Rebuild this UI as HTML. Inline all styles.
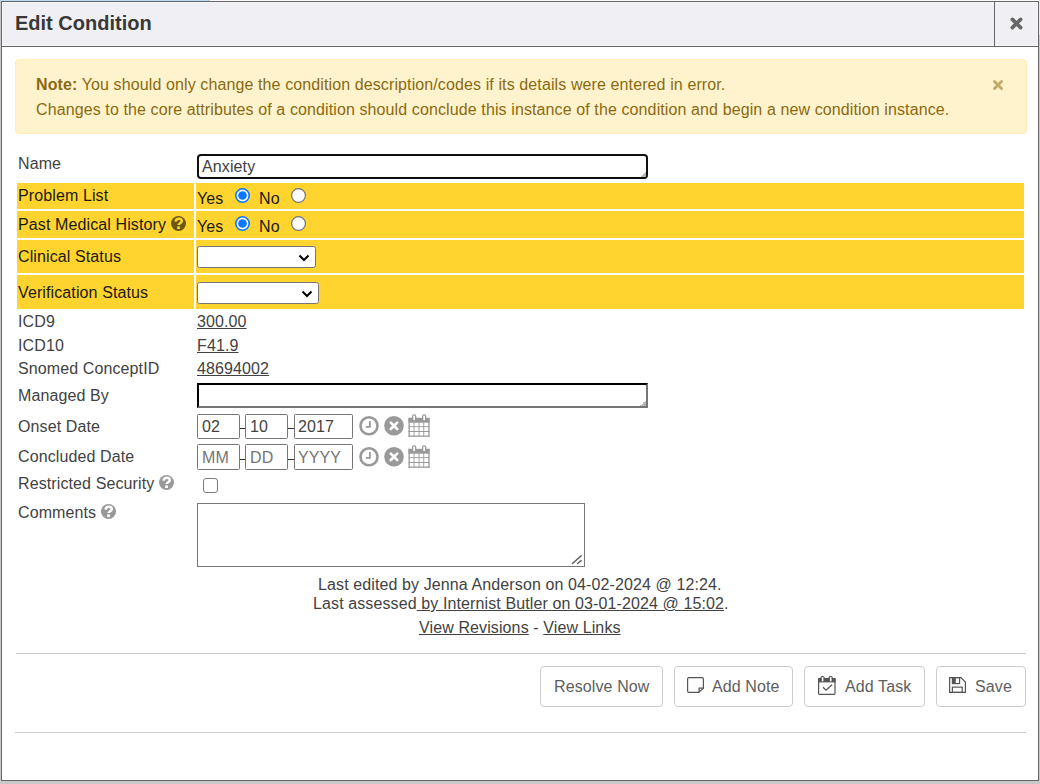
<!DOCTYPE html>
<html><head><meta charset="utf-8">
<style>
html,body{margin:0;padding:0;}
body{width:1040px;height:784px;position:relative;overflow:hidden;background:#c9c9c9;font-family:"Liberation Sans",sans-serif;font-size:16px;line-height:20px;color:#424242;letter-spacing:0.11px;}
.a{position:absolute;white-space:nowrap;}
#dlg{position:absolute;left:1px;top:1px;width:1036px;height:778px;border:1px solid #666;background:#fff;}
#hdr{position:absolute;left:2px;top:2px;width:1036px;height:44px;background:#f0f0f4;box-shadow:inset 0 0 0 1px #f7f7fa;}
.lbl{position:absolute;left:18px;white-space:nowrap;}
.y{background:#ffd42e;position:absolute;}
.blk{color:#1a1a1a;}
.lnk{text-decoration:underline;text-underline-offset:1px;}
.inp{position:absolute;box-sizing:border-box;border:1px solid #767676;border-radius:1.5px;background:#fff;}
.btn{position:absolute;box-sizing:border-box;top:666px;height:41px;border:1px solid #ccc;border-radius:4px;background:#fff;color:#555;}
.hr{position:absolute;height:1px;background:#ccc;}
svg{position:absolute;overflow:visible;}
</style></head><body>
<div class="a" style="left:0;top:0;width:1040px;height:1px;background:#fafafa"></div><div class="a" style="left:0;top:0;width:210px;height:1px;background:#b5dcf0"></div><div class="a" style="left:1039px;top:0;width:1px;height:35px;background:#ececec"></div>
<div id="dlg"></div>
<div id="hdr"></div>
<div class="a" style="left:2px;top:46px;width:1036px;height:1px;background:#666"></div>
<div class="a" style="left:994px;top:2px;width:1px;height:44px;background:#666"></div>
<div class="a" style="left:15px;top:11px;font-weight:bold;font-size:20px;line-height:24px;color:#383838;letter-spacing:0">Edit Condition</div>
<svg style="left:1010px;top:17px" width="13" height="13" viewBox="0 0 13 13"><path d="M2.4 2.4L10.6 10.6M10.6 2.4L2.4 10.6" stroke="#666" stroke-width="3.7" stroke-linecap="round"/></svg>

<!-- alert -->
<div class="a" style="left:15px;top:59px;width:1010px;height:73px;background:#fff3cd;border:1px solid #ffeeba;border-radius:4px"></div>
<div class="a" style="left:36px;top:75px;color:#8a6a10"><b>Note:</b> You should only change the condition description/codes if its details were entered in error.</div>
<div class="a" style="left:36px;top:100px;color:#8a6a10">Changes to the core attributes of a condition should conclude this instance of the condition and begin a new condition instance.</div>
<svg style="left:993px;top:80px" width="10" height="10" viewBox="0 0 10 10"><path d="M1.5 1.5L8.5 8.5M8.5 1.5L1.5 8.5" stroke="#c2ab68" stroke-width="2.9" stroke-linecap="round"/></svg>

<!-- yellow rows -->
<div class="y" style="left:17px;top:183px;width:177px;height:26px"></div>
<div class="y" style="left:196px;top:183px;width:828px;height:26px"></div>
<div class="y" style="left:17px;top:211px;width:177px;height:27px"></div>
<div class="y" style="left:196px;top:211px;width:828px;height:27px"></div>
<div class="y" style="left:17px;top:240px;width:177px;height:33px"></div>
<div class="y" style="left:196px;top:240px;width:828px;height:33px"></div>
<div class="y" style="left:17px;top:275px;width:177px;height:34px"></div>
<div class="y" style="left:196px;top:275px;width:828px;height:34px"></div>

<!-- labels -->
<div class="lbl" style="top:154px">Name</div>
<div class="lbl blk" style="top:186px">Problem List</div>
<div class="lbl blk" style="top:215px">Past Medical History</div>
<div class="lbl blk" style="top:247px">Clinical Status</div>
<div class="lbl blk" style="top:283px">Verification Status</div>
<div class="lbl" style="top:312px">ICD9</div>
<div class="lbl" style="top:336px">ICD10</div>
<div class="lbl" style="top:359px">Snomed ConceptID</div>
<div class="lbl" style="top:386px">Managed By</div>
<div class="lbl" style="top:417px">Onset Date</div>
<div class="lbl" style="top:447px">Concluded Date</div>
<div class="lbl" style="top:474px">Restricted Security</div>
<div class="lbl" style="top:503px">Comments</div>

<!-- help icons -->
<svg style="left:171px;top:216px" width="15" height="15" viewBox="0 0 15 15"><circle cx="7.5" cy="7.5" r="7.5" fill="#6a5916"/><path d="M4.6 5.6C4.8 3.8 6 2.8 7.8 2.8C9.6 2.8 10.8 3.9 10.8 5.3C10.8 7.1 7.6 7.3 7.6 9.1" fill="none" stroke="#ffd42e" stroke-width="2.5"/><rect x="6.2" y="10.4" width="2.7" height="2.6" fill="#ffd42e"/></svg>
<svg style="left:159px;top:475px" width="15" height="15" viewBox="0 0 15 15"><circle cx="7.5" cy="7.5" r="7.5" fill="#999"/><path d="M4.6 5.6C4.8 3.8 6 2.8 7.8 2.8C9.6 2.8 10.8 3.9 10.8 5.3C10.8 7.1 7.6 7.3 7.6 9.1" fill="none" stroke="#fff" stroke-width="2.5"/><rect x="6.2" y="10.4" width="2.7" height="2.6" fill="#fff"/></svg>
<svg style="left:101px;top:504px" width="15" height="15" viewBox="0 0 15 15"><circle cx="7.5" cy="7.5" r="7.5" fill="#999"/><path d="M4.6 5.6C4.8 3.8 6 2.8 7.8 2.8C9.6 2.8 10.8 3.9 10.8 5.3C10.8 7.1 7.6 7.3 7.6 9.1" fill="none" stroke="#fff" stroke-width="2.5"/><rect x="6.2" y="10.4" width="2.7" height="2.6" fill="#fff"/></svg>

<!-- Name input (focused) -->
<div class="a" style="left:197px;top:154px;width:451px;height:25px;box-sizing:border-box;border:2px solid #101010;border-radius:4px;background:#fff"></div>
<div class="a" style="left:640px;top:171px;width:6px;height:6px;background:linear-gradient(135deg,transparent 50%,#c4c4c4 50%,#a8a8a8)"></div>
<div class="a" style="left:202px;top:157px;color:#424242">Anxiety</div>

<!-- radios -->
<div class="a blk" style="left:197px;top:189px">Yes</div>
<div class="a blk" style="left:259px;top:189px">No</div>
<div class="a blk" style="left:197px;top:217px">Yes</div>
<div class="a blk" style="left:259px;top:217px">No</div>
<svg style="left:235px;top:188px" width="15" height="15" viewBox="0 0 15 15"><circle cx="7.5" cy="7.5" r="6.7" fill="#fff" stroke="#0a77ff" stroke-width="1.6"/><circle cx="7.5" cy="7.5" r="4.35" fill="#0a77ff"/></svg>
<svg style="left:291px;top:188px" width="15" height="15" viewBox="0 0 15 15"><circle cx="7.5" cy="7.5" r="6.9" fill="#fff" stroke="#6f727c" stroke-width="1.2"/></svg>
<svg style="left:235px;top:216px" width="15" height="15" viewBox="0 0 15 15"><circle cx="7.5" cy="7.5" r="6.7" fill="#fff" stroke="#0a77ff" stroke-width="1.6"/><circle cx="7.5" cy="7.5" r="4.35" fill="#0a77ff"/></svg>
<svg style="left:291px;top:216px" width="15" height="15" viewBox="0 0 15 15"><circle cx="7.5" cy="7.5" r="6.9" fill="#fff" stroke="#6f727c" stroke-width="1.2"/></svg>

<!-- selects -->
<div class="inp" style="left:197px;top:246px;width:119px;height:22px;border-radius:2.5px"></div>
<svg style="left:298px;top:254px" width="12" height="8" viewBox="0 0 12 8"><path d="M1.5 1.5L6 6L10.5 1.5" fill="none" stroke="#000" stroke-width="2"/></svg>
<div class="inp" style="left:197px;top:282px;width:122px;height:22px;border-radius:2.5px"></div>
<svg style="left:301px;top:290px" width="12" height="8" viewBox="0 0 12 8"><path d="M1.5 1.5L6 6L10.5 1.5" fill="none" stroke="#000" stroke-width="2"/></svg>

<!-- codes -->
<div class="a lnk" style="left:197px;top:312px">300.00</div>
<div class="a lnk" style="left:197px;top:336px">F41.9</div>
<div class="a lnk" style="left:197px;top:359px">48694002</div>

<!-- managed by -->
<div class="a" style="left:197px;top:383px;width:451px;height:25px;box-sizing:border-box;border-style:solid;border-width:2px;border-color:#000 #767676 #767676 #000;background:#fff"></div>
<div class="a" style="left:640px;top:400px;width:6px;height:6px;background:linear-gradient(135deg,transparent 50%,#c4c4c4 50%,#a8a8a8)"></div>

<!-- onset date -->
<div class="inp" style="left:197px;top:414px;width:43px;height:25px"></div>
<div class="inp" style="left:245px;top:414px;width:43px;height:25px"></div>
<div class="inp" style="left:294px;top:414px;width:59px;height:25px"></div>
<div class="a" style="left:202px;top:417px">02</div>
<div class="a" style="left:250px;top:417px">10</div>
<div class="a" style="left:298px;top:417px">2017</div>
<div class="a" style="left:240px;top:428px;width:5px;height:1px;background:#333"></div>
<div class="a" style="left:288px;top:428px;width:6px;height:1px;background:#333"></div>

<!-- concluded date -->
<div class="inp" style="left:197px;top:444px;width:43px;height:26px"></div>
<div class="inp" style="left:245px;top:444px;width:43px;height:26px"></div>
<div class="inp" style="left:294px;top:444px;width:59px;height:26px"></div>
<div class="a" style="left:202px;top:448px;color:#757575">MM</div>
<div class="a" style="left:250px;top:448px;color:#757575">DD</div>
<div class="a" style="left:298px;top:448px;color:#757575">YYYY</div>
<div class="a" style="left:240px;top:459px;width:5px;height:1px;background:#333"></div>
<div class="a" style="left:288px;top:459px;width:6px;height:1px;background:#333"></div>

<!-- date icons -->
<svg style="left:359px;top:416px" width="20" height="20" viewBox="0 0 20 20"><circle cx="10" cy="9.8" r="8.5" fill="none" stroke="#999" stroke-width="2.6"/><path d="M10.9 5V10.9H6.8" fill="none" stroke="#999" stroke-width="1.8"/></svg>
<svg style="left:384px;top:416px" width="20" height="20" viewBox="0 0 20 20"><circle cx="10" cy="9.8" r="9.8" fill="#999"/><path d="M6.8 6.6L13.2 13M13.2 6.6L6.8 13" stroke="#fff" stroke-width="2.7" stroke-linecap="round"/></svg>
<svg style="left:408px;top:414px" width="22" height="23" viewBox="0 0 22 23"><g fill="#999"><rect x="0.5" y="3.8" width="21" height="4.9"/><rect x="0.5" y="3.8" width="1.3" height="19"/><rect x="20.3" y="3.8" width="1.3" height="19"/><rect x="0.5" y="21.5" width="21" height="1.3"/><rect x="0.5" y="12.2" width="21" height="0.9"/><rect x="0.5" y="17" width="21" height="1"/><rect x="5.6" y="8" width="0.9" height="14"/><rect x="10.6" y="8" width="0.9" height="14"/><rect x="15.3" y="8" width="0.9" height="14"/></g><rect x="4" y="0.3" width="4.3" height="6" rx="2" fill="#999"/><rect x="5.3" y="1.6" width="1.7" height="4.5" fill="#fff"/><rect x="14" y="0.3" width="4.3" height="6" rx="2" fill="#999"/><rect x="15.3" y="1.6" width="1.7" height="4.5" fill="#fff"/></svg>

<!-- date icons 2 -->
<svg style="left:359px;top:447px" width="20" height="20" viewBox="0 0 20 20"><circle cx="10" cy="9.8" r="8.5" fill="none" stroke="#999" stroke-width="2.6"/><path d="M10.9 5V10.9H6.8" fill="none" stroke="#999" stroke-width="1.8"/></svg>
<svg style="left:384px;top:447px" width="20" height="20" viewBox="0 0 20 20"><circle cx="10" cy="9.8" r="9.8" fill="#999"/><path d="M6.8 6.6L13.2 13M13.2 6.6L6.8 13" stroke="#fff" stroke-width="2.7" stroke-linecap="round"/></svg>
<svg style="left:408px;top:445px" width="22" height="23" viewBox="0 0 22 23"><g fill="#999"><rect x="0.5" y="3.8" width="21" height="4.9"/><rect x="0.5" y="3.8" width="1.3" height="19"/><rect x="20.3" y="3.8" width="1.3" height="19"/><rect x="0.5" y="21.5" width="21" height="1.3"/><rect x="0.5" y="12.2" width="21" height="0.9"/><rect x="0.5" y="17" width="21" height="1"/><rect x="5.6" y="8" width="0.9" height="14"/><rect x="10.6" y="8" width="0.9" height="14"/><rect x="15.3" y="8" width="0.9" height="14"/></g><rect x="4" y="0.3" width="4.3" height="6" rx="2" fill="#999"/><rect x="5.3" y="1.6" width="1.7" height="4.5" fill="#fff"/><rect x="14" y="0.3" width="4.3" height="6" rx="2" fill="#999"/><rect x="15.3" y="1.6" width="1.7" height="4.5" fill="#fff"/></svg>

<!-- checkbox -->
<div class="inp" style="left:203px;top:478px;width:15px;height:15px;border-radius:3px;border-color:#7c7c7c"></div>

<!-- textarea -->
<div class="inp" style="left:197px;top:503px;width:388px;height:64px;border-radius:0"></div>
<svg style="left:570px;top:553px" width="14" height="14" viewBox="0 0 14 14"><path d="M2.5 10.5L11.2 2.8M7.6 10.5L11.2 7.6" stroke="#5a5a5a" stroke-width="1.4" stroke-linecap="round"/></svg>

<!-- footer text -->
<div class="a" style="left:318px;top:575px">Last edited by Jenna Anderson on 04-02-2024 @ 12:24.</div>
<div class="a" style="left:313px;top:594px">Last assessed<span class="lnk"> by Internist Butler on 03-01-2024 @ 15:02</span>.</div>
<div class="a" style="left:419px;top:618px"><span class="lnk">View Revisions</span> - <span class="lnk">View Links</span></div>

<div class="hr" style="left:16px;top:653px;width:1010px"></div>
<div class="hr" style="left:15px;top:732px;width:1011px"></div>

<!-- buttons -->
<div class="btn" style="left:540px;width:123px"></div>
<div class="btn" style="left:674px;width:119px"></div>
<div class="btn" style="left:804px;width:121px"></div>
<div class="btn" style="left:936px;width:90px"></div>
<div class="a" style="left:554px;top:677px;color:#5e5e5e">Resolve Now</div>
<div class="a" style="left:712px;top:677px;color:#5e5e5e">Add Note</div>
<div class="a" style="left:845px;top:677px;color:#5e5e5e">Add Task</div>
<div class="a" style="left:975px;top:677px;color:#5e5e5e">Save</div>
<svg style="left:687px;top:677px" width="17" height="16" viewBox="0 0 17 16"><path d="M1.9 0.6H15.1Q16.4 0.6 16.4 1.9V11.2L11.7 15.4H1.9Q0.6 15.4 0.6 14.1V1.9Q0.6 0.6 1.9 0.6Z" fill="none" stroke="#555" stroke-width="1.2"/><path d="M16.4 11.1H12.1V15.4" fill="none" stroke="#555" stroke-width="1.2"/></svg>
<svg style="left:818px;top:676px" width="18" height="19" viewBox="0 0 18 19"><rect x="0.6" y="2.6" width="16.4" height="15.8" rx="0.8" fill="none" stroke="#555" stroke-width="1.2"/><rect x="0" y="2.1" width="17.6" height="4.3" fill="#555"/><rect x="2.5" y="0" width="4.1" height="5.4" rx="1.6" fill="#555"/><rect x="3.8" y="1.1" width="1.6" height="4.2" fill="#fff"/><rect x="10.6" y="0" width="4.1" height="5.4" rx="1.6" fill="#555"/><rect x="11.9" y="1.1" width="1.6" height="4.2" fill="#fff"/><path d="M5 11.3L8 14.2L14 8.7" fill="none" stroke="#555" stroke-width="1.3"/></svg>
<svg style="left:949px;top:677px" width="17" height="16" viewBox="0 0 17 16"><path d="M0.6 0.6H11.9L16.4 5V15.4H0.6Z" fill="none" stroke="#555" stroke-width="1.2"/><rect x="3.4" y="0.6" width="7.2" height="6" fill="none" stroke="#555" stroke-width="1.2"/><rect x="3.4" y="0.6" width="3.4" height="6" fill="#555"/><rect x="3.4" y="10.1" width="9.8" height="5.3" fill="none" stroke="#555" stroke-width="1.2"/></svg>
</body></html>
